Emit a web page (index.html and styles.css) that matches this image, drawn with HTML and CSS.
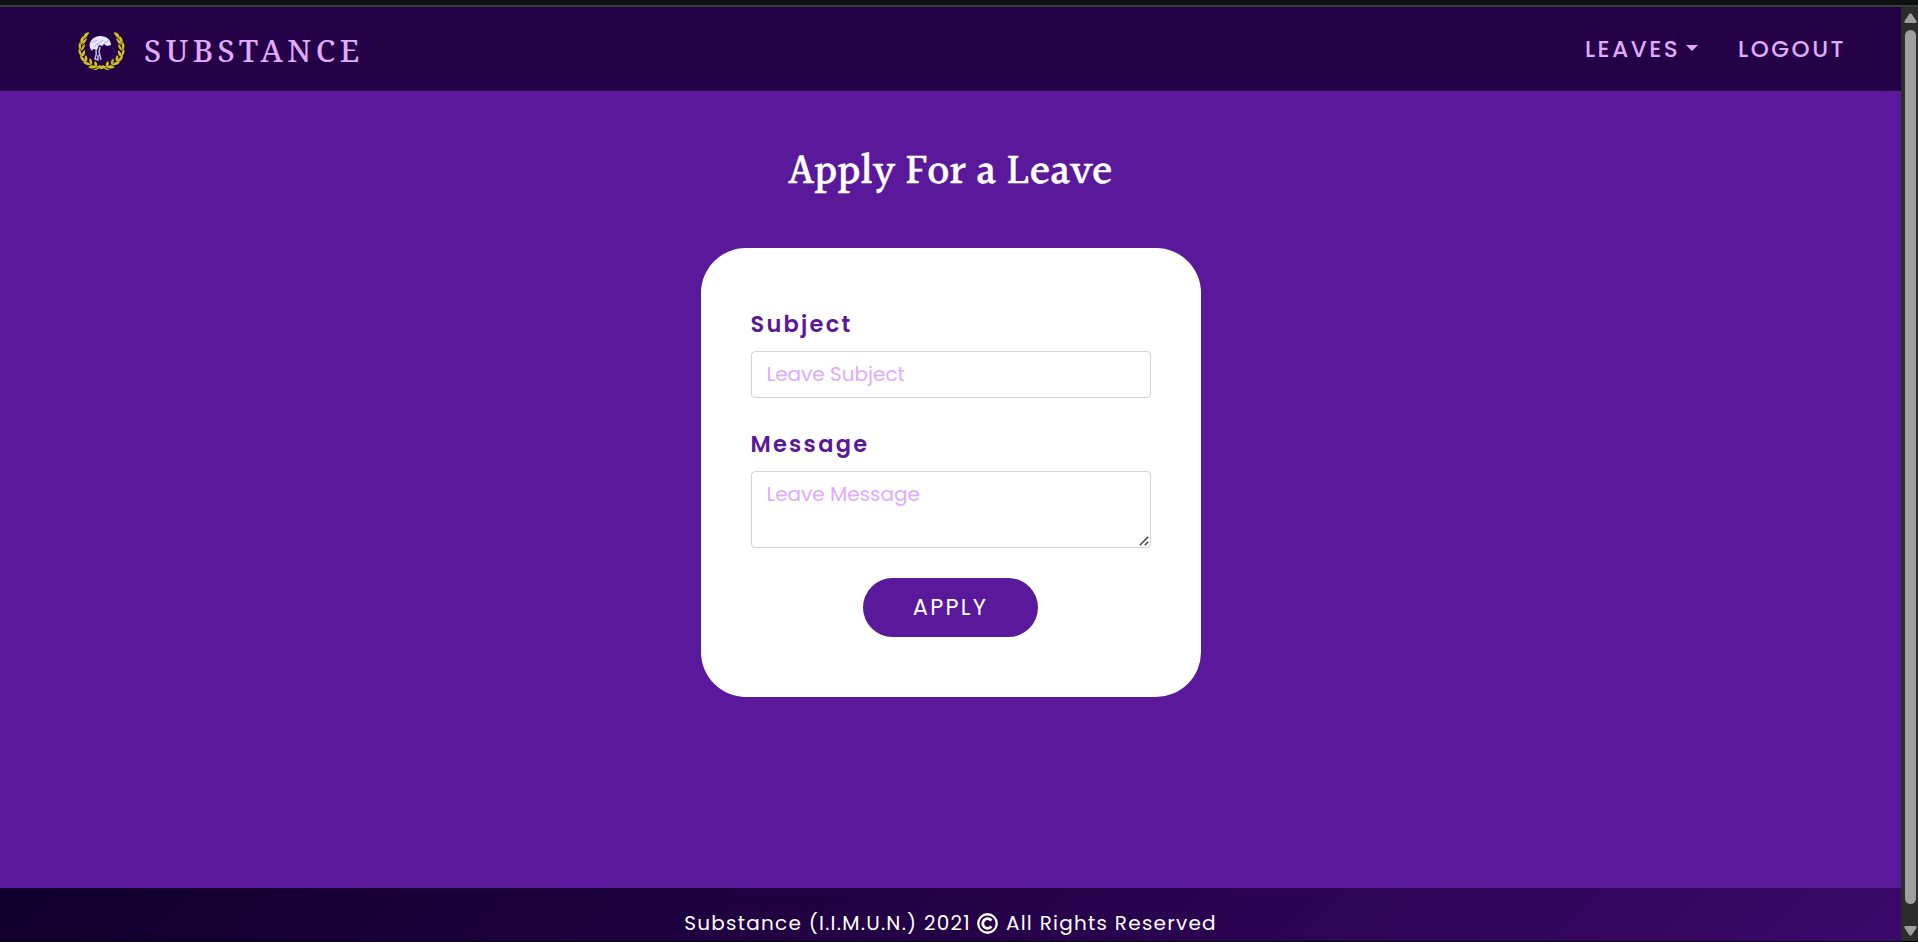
FILE: index.html
```html
<!DOCTYPE html>
<html lang="en">
<head>
<meta charset="utf-8">
<title>Substance</title>
<link rel="stylesheet" href="styles.css">
</head>
<body>
<div class="chrome-strip"></div>
<div class="viewport">
  <div class="page">
    <nav class="navbar">
      <a class="brand">
        <svg class="brand-logo" viewBox="0 0 48 40" width="48" height="40">
          <defs>
            <g id="branch">
              <path d="M11 1C5 6 1 12 2 20C3 28 9 34 22 35" fill="none" stroke="#8f8612" stroke-width="1.3"/>
              <g fill="#cfc51c">
                <path d="M11 0Q5 1 5 7Q9 6 11 0Z"/>
                <path d="M5 4Q1 7 3 12Q6 9 5 4Z"/>
                <path d="M9 6Q4 8 4 13Q8 11 9 6Z"/>
                <path d="M2 10Q-1 14 2 18Q4 14 2 10Z"/>
                <path d="M7 12Q3 14 3 19Q7 17 7 12Z"/>
                <path d="M1 17Q-1 21 4 25Q4 20 1 17Z"/>
                <path d="M7 18Q3 20 4 25Q8 23 7 18Z"/>
                <path d="M2 24Q2 29 8 30Q6 25 2 24Z"/>
                <path d="M8 23Q5 26 8 30Q11 27 8 23Z"/>
                <path d="M5 30Q8 34 13 33Q10 29 5 30Z"/>
                <path d="M12 26Q10 29 13 33Q16 30 12 26Z"/>
                <path d="M10 35Q14 38 19 35Q15 32 10 35Z"/>
                <path d="M17 29Q15 32 18 35Q21 32 17 29Z"/>
                <path d="M22 33L26 36L24 37L18 35ZM19 36L15 38L18 38L22 36Z"/>
              </g>
            </g>
          </defs>
          <use href="#branch"/>
          <use href="#branch" transform="matrix(-1 0 0 1 47 0)"/>
          <path d="M12 16C10 9 16 4 22 4C29 4 33 8 33 13L29 14L26 12L24 14L21 13L19 18L15 17L14 19Z" fill="#e9e7ff"/>
          <path d="M14 11L19 8M19 13L25 8M16 15L20 11M26 11L31 9" stroke="#a39ddd" stroke-width=".8"/>
          <path d="M18 18Q19 22 17 27L20 28L20 23M22 15L21 20L23 28" fill="none" stroke="#c5bde9" stroke-width="1.5"/>
          <path d="M34 15L37 21L34 24L34 28L29 29" fill="none" stroke="#32136c"/>
        </svg>
        <span class="brand-name">SUBSTANCE</span>
      </a>
      <div class="nav-links">
        <a class="nav-link">LEAVES<span class="caret"></span></a>
        <a class="nav-link">LOGOUT</a>
      </div>
    </nav>
    <main class="content">
      <h1 class="title">Apply For a Leave</h1>
      <form class="card">
        <label class="label">Subject</label>
        <input class="field subject" type="text" placeholder="Leave Subject">
        <label class="label">Message</label>
        <div class="message-wrap">
          <textarea class="field message" placeholder="Leave Message"></textarea>
          <svg class="grip" width="10" height="10" viewBox="0 0 10 10"><path d="M.8 9.2L9.2.8M5.8 9.2L9.2 5.8" stroke="#4a4a4a" stroke-width="1.6"/></svg>
        </div>
        <button class="apply" type="button">APPLY</button>
      </form>
    </main>
    <footer class="footer"><span>Substance (I.I.M.U.N.) 2021</span>
      <svg class="copyright" width="21" height="21" viewBox="0 0 20 20" fill="none" stroke="#fff"><circle cx="10" cy="10" r="8.8" stroke-width="2.2"/><path d="M13.7 7.2A4.6 4.6 0 1 0 13.7 12.8" stroke-width="2.7"/></svg>
      <span>All Rights Reserved</span></footer>
  </div>
  <div class="scrollbar">
    <svg width="13" height="10" viewBox="0 0 13 10"><path d="M5.3 1Q6.5-.5 7.7 1L12.4 8Q13 10 11.5 10H1.5Q0 10 .6 8Z" fill="#9f9f9f"/></svg>
    <div class="thumb"></div>
    <svg width="13" height="10" viewBox="0 0 13 10"><path d="M5.3 9Q6.5 10.5 7.7 9L12.4 2Q13 0 11.5 0H1.5Q0 0 .6 2Z" fill="#9f9f9f"/></svg>
  </div>
</div>
</body>
</html>
```
FILE: styles.css
```css
* { box-sizing: border-box; }
body {
  margin: 0;
  height: 942px;
  overflow: hidden;
  display: flex;
  flex-direction: column;
  background: #000;
  font-family: Poppins, Inter, "Noto Sans", sans-serif;
}
.chrome-strip { height: 7px; flex: none; background: #0f1213; border-bottom: 2px solid #3c3c3c; }
.viewport { display: flex; height: 934px; }
.page { flex: 1; display: flex; flex-direction: column; background: #5a189a; }
.navbar {
  height: 84px;
  flex: none;
  padding: 0 55px 0 78px;
  display: flex;
  justify-content: space-between;
  align-items: center;
  background: #240046;
  color: #e0aaff;
}
.brand { display: flex; align-items: center; gap: 18px; }
.brand-logo { margin-top: 6px; }
.brand-name {
  font-family: "Noto Serif", "DejaVu Serif", serif;
  font-weight: 500;
  font-size: 31px;
  line-height: 40px;
  letter-spacing: 4.5px;
  margin-top: 1px;
}
.nav-links { display: flex; gap: 40px; }
.nav-link { display: flex; align-items: center; font-size: 23px; line-height: 34px; font-weight: 500; letter-spacing: 2.5px; }
.caret { margin-left: 6px; margin-top: -3px; border: 6px solid transparent; border-top-color: #e0aaff; border-bottom: 0; }
.content { flex: 1; display: flex; flex-direction: column; align-items: center; }
.title {
  margin: 54px 0 0;
  height: 103px;
  font-family: Halant, Gupter, "Liberation Serif", serif;
  font-size: 42.5px;
  line-height: 56px;
  font-weight: 500;
  color: #fff;
  -webkit-text-stroke: .5px #fff;
}
.card {
  width: 500px;
  height: 449px;
  padding: 58px 50px 0;
  display: flex;
  flex-direction: column;
  border-radius: 45px;
  background: #fff;
}
.label { height: 45px; color: #5a189a; font-size: 22.5px; line-height: 36px; font-weight: 600; letter-spacing: 2.25px; }
.field {
  display: block;
  width: 400px;
  margin: 0;
  padding: 6px 15px;
  border: 1px solid #ced4da;
  border-radius: 4px;
  font-family: inherit;
  font-size: 20px;
  line-height: 33px;
  background: #fff;
  outline: 0;
}
.field::placeholder { color: #e0aaff; opacity: 1; }
.subject { height: 47px; margin-bottom: 28px; padding: 5px 15px 7px; }
.message-wrap { position: relative; margin-bottom: 30px; }
.message { height: 77px; overflow: hidden; resize: none; }
.grip { position: absolute; right: 2px; bottom: 2px; }
.apply {
  align-self: center;
  width: 175px;
  height: 59px;
  padding: 0 0 2px;
  border: 0;
  border-radius: 30px;
  background: #5a189a;
  color: #fff;
  font-family: inherit;
  font-size: 22.5px;
  line-height: 34px;
  letter-spacing: 2.25px;
}
.footer {
  height: 53px;
  flex: none;
  padding-top: 17px;
  display: flex;
  justify-content: center;
  align-items: center;
  background: linear-gradient(135deg, #10002b, #240046 50%, #3c096c);
  color: #fff;
  font-size: 20px;
  line-height: 36px;
  letter-spacing: 1.25px;
}
.copyright { margin: 0 8px 0 6px; }
.scrollbar { width: 17px; flex: none; padding: 6px 0 5px 2px; display: flex; flex-direction: column; align-items: center; background: #2c2c2c; }
.thumb { width: 11px; height: 874px; margin: 7px 0 auto; border-radius: 6px; background: #9f9f9f; flex: none; }
```
